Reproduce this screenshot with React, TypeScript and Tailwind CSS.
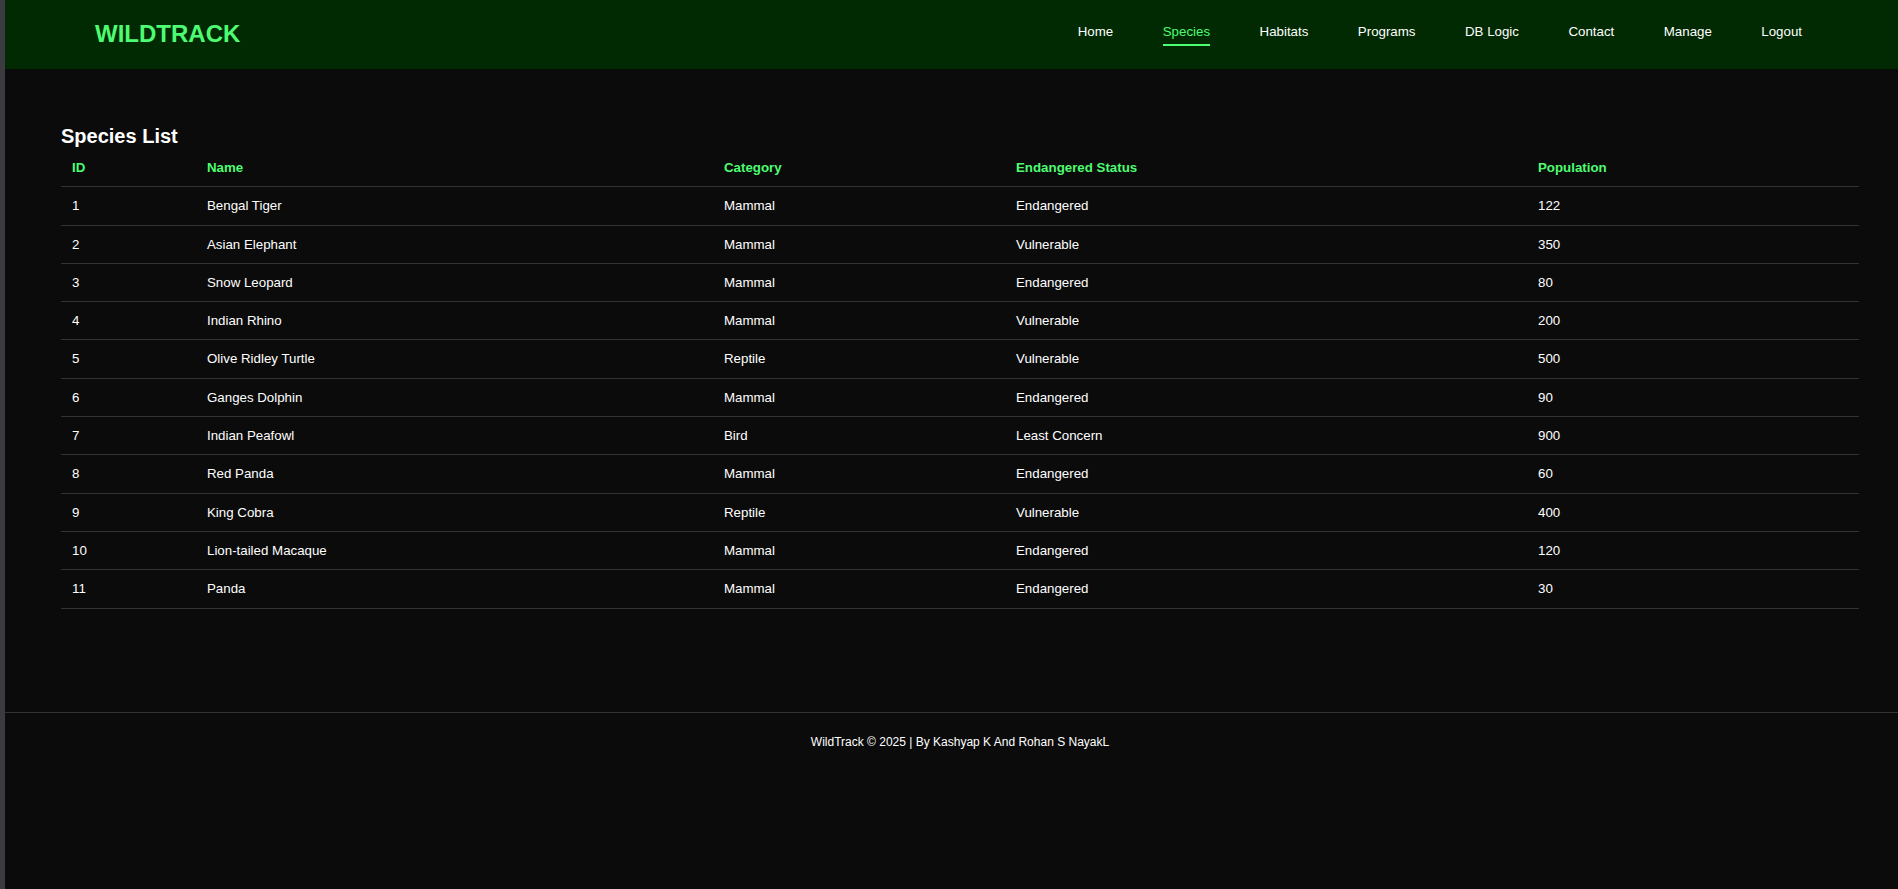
import React from 'react';

const NAV_LINKS = ['Home', 'Species', 'Habitats', 'Programs', 'DB Logic', 'Contact', 'Manage', 'Logout'];

const SPECIES = [
  { id: 1, name: 'Bengal Tiger', category: 'Mammal', status: 'Endangered', population: 122 },
  { id: 2, name: 'Asian Elephant', category: 'Mammal', status: 'Vulnerable', population: 350 },
  { id: 3, name: 'Snow Leopard', category: 'Mammal', status: 'Endangered', population: 80 },
  { id: 4, name: 'Indian Rhino', category: 'Mammal', status: 'Vulnerable', population: 200 },
  { id: 5, name: 'Olive Ridley Turtle', category: 'Reptile', status: 'Vulnerable', population: 500 },
  { id: 6, name: 'Ganges Dolphin', category: 'Mammal', status: 'Endangered', population: 90 },
  { id: 7, name: 'Indian Peafowl', category: 'Bird', status: 'Least Concern', population: 900 },
  { id: 8, name: 'Red Panda', category: 'Mammal', status: 'Endangered', population: 60 },
  { id: 9, name: 'King Cobra', category: 'Reptile', status: 'Vulnerable', population: 400 },
  { id: 10, name: 'Lion-tailed Macaque', category: 'Mammal', status: 'Endangered', population: 120 },
  { id: 11, name: 'Panda', category: 'Mammal', status: 'Endangered', population: 30 },
];

const COLUMNS = ['ID', 'Name', 'Category', 'Endangered Status', 'Population'];

export default function App() {
  return (
    <div className="flex min-h-screen bg-[#0b0b0b] font-['Liberation_Sans',Arial,sans-serif] text-white">
      {/* left edge strip */}
      <div className="w-[5px] shrink-0 bg-[#3b3b40]" />

      <div className="flex flex-1 flex-col">
        {/* Header */}
        <header className="flex h-[69px] items-center justify-between bg-[#012a02] pl-[90px] pr-[96px]">
          <div className="pb-[2px] text-[24px] font-bold leading-[28px] text-[#4dfc72]">WILDTRACK</div>
          <nav className="flex items-center gap-[49.5px] text-[13.3px] leading-[15.3px]">
            {NAV_LINKS.map((link) => (
              <a
                key={link}
                href="#"
                className={`border-b-2 pb-[4px] pt-[1px] ${
                  link === 'Species'
                    ? 'border-[#4dfc72] text-[#4dfc72]'
                    : 'border-transparent text-white'
                }`}
              >
                {link}
              </a>
            ))}
          </nav>
        </header>

        {/* Main */}
        <main className="pl-[56px] pr-[39px] pb-[103px] pt-[56px]">
          <h2 className="mb-[1px] text-[20px] font-bold leading-[23px] text-white">Species List</h2>
          <table className="w-full table-fixed border-collapse text-left text-[13.3px] leading-[15.3px]">
            <colgroup>
              <col className="w-[135px]" />
              <col className="w-[517px]" />
              <col className="w-[292px]" />
              <col className="w-[522px]" />
              <col className="w-[332px]" />
            </colgroup>
            <thead>
              <tr className="border-b border-[#333333]">
                {COLUMNS.map((col) => (
                  <th key={col} className="px-[11px] py-[11px] font-bold text-[#4dfc72]">
                    {col}
                  </th>
                ))}
              </tr>
            </thead>
            <tbody>
              {SPECIES.map((s) => (
                <tr key={s.id} className="border-b border-[#333333]">
                  <td className="px-[11px] py-[11px]">{s.id}</td>
                  <td className="px-[11px] py-[11px]">{s.name}</td>
                  <td className="px-[11px] py-[11px]">{s.category}</td>
                  <td className="px-[11px] py-[11px]">{s.status}</td>
                  <td className="px-[11px] py-[11px]">{s.population}</td>
                </tr>
              ))}
            </tbody>
          </table>
        </main>

        {/* Footer */}
        <footer className="border-t border-[#333333] pl-[56px] pr-[39px] pt-[22px] text-center text-[12px] leading-[14px] text-white">
          WildTrack © 2025 | By Kashyap K And Rohan S NayakL
        </footer>
      </div>
    </div>
  );
}
